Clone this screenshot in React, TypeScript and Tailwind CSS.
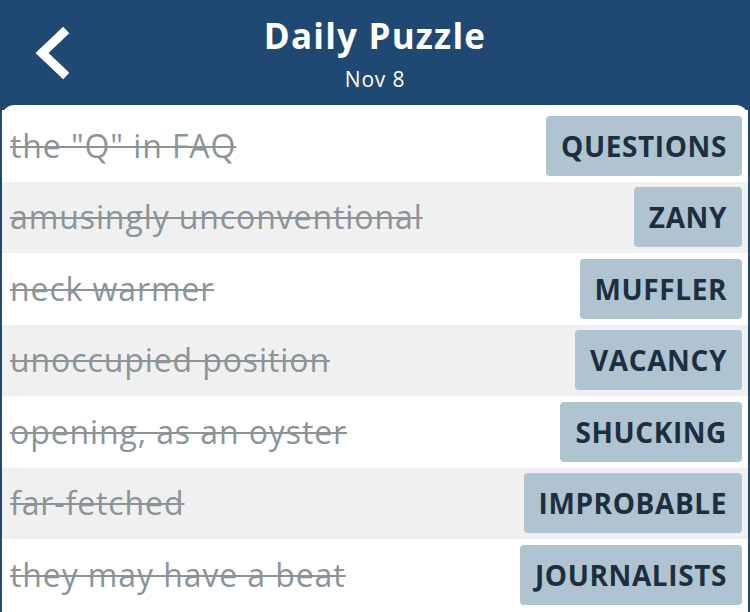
import React from "react";

const rows: [string, string][] = [
  ['the "Q" in FAQ', "QUESTIONS"],
  ["amusingly unconventional", "ZANY"],
  ["neck warmer", "MUFFLER"],
  ["unoccupied position", "VACANCY"],
  ["opening, as an oyster", "SHUCKING"],
  ["far-fetched", "IMPROBABLE"],
  ["they may have a beat", "JOURNALISTS"],
];

export default function App() {
  return (
    <div
      className="w-[750px] h-[612px] overflow-hidden bg-[#1f4872]"
      style={{ fontFamily: "'Open Sans', Lato, sans-serif" }}
    >
      <div className="relative h-[105px] flex flex-col items-center">
        <div className="absolute left-[30px] top-[22px]">
          <svg width="46" height="62" viewBox="30 22 46 62">
            <path d="M63 33 L42 53 L63 73" fill="none" stroke="white" strokeWidth="9" strokeLinecap="square" strokeLinejoin="miter" />
          </svg>
        </div>
        <div className="mt-[12px] text-white font-bold text-[35px] leading-[48px] tracking-[1.2px]">Daily Puzzle</div>
        <div className="mt-[5px] text-white text-[21px] leading-[28px] tracking-[0.8px]">Nov 8</div>
      </div>
      <div className="mx-[2px] bg-white rounded-t-[12px] pt-[5px] h-[507px]">
        {rows.map(([clue, ans], i) => (
          <div
            key={i}
            className={`h-[71.5px] flex items-center justify-between pl-[8px] pr-[6px] ${i % 2 === 1 ? "bg-[#f0f0f0]" : "bg-white"}`}
          >
            <span className="text-[32px] tracking-[0.9px] text-[#8b9499] line-through decoration-[2px]">{clue}</span>
            <span className="h-[60px] flex items-center px-[15px] rounded-[4px] bg-[#afc3d0] text-[#1d2f3f] font-bold text-[28px] tracking-[0.6px]">
              {ans}
            </span>
          </div>
        ))}
      </div>
    </div>
  );
}
